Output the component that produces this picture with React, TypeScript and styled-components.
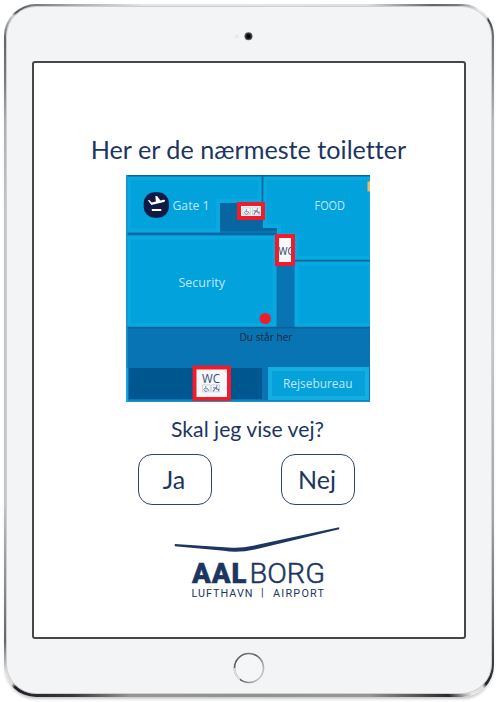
import React from 'react';
import styled, { createGlobalStyle } from 'styled-components';

const navy = '#1c3661';

const GlobalStyle = createGlobalStyle`
  * { box-sizing: border-box; }
  body {
    margin: 0;
    background: #fff;
    font-family: Lato, sans-serif;
    font-variant-ligatures: none;
    color: ${navy};
  }
`;

const Page = styled.main`
  width: 498px;
  height: 702px;
  padding: 4px 4px 5px;
  overflow: hidden;
`;

const MetalEdge = styled.div`
  width: 490px;
  height: 693px;
  padding: 2px 2px 3px;
  border-radius: 32px;
  background: conic-gradient(
    #e4e5e5 0deg, #dedfdf 19deg, #99999c 24deg, #66656a 28deg, #77777b 31deg,
    #eee 34deg, #e0e0e0 35.5deg, #444 35.9deg, #727277 38deg, #88888c 41deg,
    #b9babc 47deg, #c4c5c7 90deg, #a5a6a8 124deg, #77777b 135deg, #3d3d42 142deg,
    #222 144.6deg, #ddd 145.2deg, #e8e9e9 147deg, #29292c 150deg, #555 154deg,
    #969696 161deg, #8f9090 180deg, #969696 199deg, #38383b 207deg, #202124 214.8deg,
    #ddd 215.4deg, #e0e1e2 217deg, #66666a 220deg, #8d8d91 226deg, #c4c5c7 238deg,
    #c4c5c7 300deg, #b0b0b4 313deg, #7b7a80 318deg, #66656a 322deg, #d5d5d5 324.8deg,
    #555 325.4deg, #77777a 328deg, #aaa 333deg, #e4e5e5 343deg
  );
  box-shadow: 0 3px 3px -1px rgba(0, 0, 0, 0.22);
`;

const Casing = styled.div`
  height: 100%;
  display: flex;
  flex-direction: column;
  align-items: center;
  border: 1px solid #cdcfd1;
  border-radius: 30px;
  background: #f3f4f6;
`;

const CameraBar = styled.div`
  height: 54px;
  width: 100%;
  flex: none;
  display: flex;
  justify-content: center;
  padding: 23px 0 0;
`;

const Display = styled.section`
  width: 434px;
  height: 578px;
  flex: none;
  display: flex;
  flex-direction: column;
  align-items: center;
  padding-right: 2px;
  border: 2px solid #47474a;
  border-radius: 3px;
  background: #fff;
`;

const HomeBar = styled.div`
  flex: 1;
  display: flex;
  align-items: center;
  justify-content: center;
  padding-top: 3px;
`;

const Heading = styled.h1`
  margin: 70px 0 0;
  padding-left: 1px;
  font-size: 25.2px;
  line-height: 32px;
  font-weight: 400;
  white-space: nowrap;
`;

const Map = styled.svg`
  display: block;
  flex: none;
  margin-top: 10px;
`;

const Question = styled.p`
  margin: 13px 0 0;
  padding-right: 1px;
  font-size: 21.2px;
  line-height: 28px;
  white-space: nowrap;
`;

const Answers = styled.div`
  display: flex;
  gap: 69px;
  margin: 11px 0 0;
  padding-right: 3px;
`;

const AnswerButton = styled.button`
  width: 74px;
  height: 51px;
  padding: 0 2px 1px 0;
  border: 1.5px solid #2c4470;
  border-radius: 14px;
  background: #fff;
  color: ${navy};
  font: 400 25px Lato, sans-serif;
`;

const Logo = styled.svg`
  display: block;
  flex: none;
  margin-top: 21px;
  margin-left: 17px;
`;

const Camera = () => (
  <svg width="38" height="12" viewBox="230 30 38 12">
    <circle cx="236.8" cy="36.4" r="2" fill="#e8e9eb" />
    <circle cx="248.5" cy="36.3" r="4" fill="#5b5c60" />
    <circle cx="248.5" cy="36.3" r="3" fill="#1b1c1f" />
    <circle cx="248.5" cy="36.3" r="1.4" fill="#000" />
  </svg>
);

const HomeButton = () => (
  <svg width="34" height="34" viewBox="0 0 34 34">
    <defs>
      <linearGradient id="homeRing" x1="0" y1="0.2" x2="1" y2="0.8">
        <stop offset="0" stopColor="#55565a" />
        <stop offset="0.3" stopColor="#77787b" />
        <stop offset="0.48" stopColor="#5c5c60" />
        <stop offset="0.8" stopColor="#a6a7a9" />
        <stop offset="1" stopColor="#d4d5d6" />
      </linearGradient>
    </defs>
    <circle cx="17" cy="17" r="14.5" fill="#f5f6f7" stroke="url(#homeRing)" strokeWidth="1.7" />
    <path d="M2.5 17A14.5 14.5 0 0 0 8 28.4" fill="none" stroke="#dfe0e1" strokeWidth="1.8" />
  </svg>
);

const AccessIcons = ({ x, y }: { x: number; y: number }) => (
  <g transform={`translate(${x} ${y})`} fill="none" stroke="#6a7898" strokeWidth="0.9">
    <rect x="0.4" y="0.4" width="7.8" height="7" stroke="#c1c7d0" strokeWidth="0.7" />
    <path d="M3.8 1.5v2.8h2l1 2M3.1 3.6a1.7 1.7 0 1 0 2.3 2.3" />
    <rect x="9.8" y="0.4" width="7.8" height="7" stroke="#c1c7d0" strokeWidth="0.7" />
    <path d="M11.2 6.8l1.7-2.3 1.7-2 .2 2.3h1.8v2M11 3.2h2.3M14.4 1.2h1" strokeWidth="1.1" />
  </g>
);

const AirportMap = () => (
  <Map width="244" height="227" viewBox="126 175 244 227" fontFamily="'Open Sans', sans-serif">
    <rect x="126" y="175" width="244" height="227" fill="#0874b3" />
    <path d="M126 175h244v56H126z" fill="#07659f" />
    <g fill="#02a2dc" stroke="#09a9df" strokeWidth="4">
      <path d="M129 178H260.500V201H218V230.500H129Z" />
      <path d="M265 178H371V258H296.500V235H279V226H265Z" />
      <path d="M129 237.500H274.500V325.500H129Z" />
      <path d="M296.500 263.500H371V325.500H296.500Z" />
    </g>
    <path d="M126 175.500H370M126 327.700H370" stroke="#07639a" strokeWidth="1.8" />
    <path d="M126 233.800H276M262.500 175V205" stroke="#0868a4" strokeWidth="1.7" />
    <path d="M295 260.500H370" stroke="#0868a4" strokeWidth="1.5" />
    <path d="M129 368H262V399H129Z" fill="#00568f" />
    <path d="M126.800 175V402M126 401.200H370" stroke="#1995cb" strokeWidth="1.6" />
    <path d="M126.800 368V402" stroke="#18aae0" strokeWidth="2" />
    <rect x="270" y="369" width="97" height="29" fill="#04a1da" stroke="#14aee2" strokeWidth="4" />
    <rect x="367.500" y="181.500" width="2.500" height="10" fill="#efba63" />

    <rect x="143.700" y="192.300" width="25.200" height="25.400" rx="10.500" fill="#101b45" />
    <path d="M147.800 200.200l1.500-.3 2.400 2.600 4.200-1-.6-5.200 1.800-.4 3.300 4.600 3-.7c1.900-.4 2.300 1.600.6 2.100l-12.600 3.100z" fill="#fff" />
    <rect x="151.800" y="209" width="9.500" height="2.100" rx="0.500" fill="#fff" />

    <g fill="#bfe8fa" fontSize="13.500">
      <text x="172.500" y="210" textLength="37" lengthAdjust="spacingAndGlyphs">Gate 1</text>
      <text x="314.500" y="210" textLength="30.500" lengthAdjust="spacingAndGlyphs">FOOD</text>
      <text x="178.500" y="287" textLength="46.500" lengthAdjust="spacingAndGlyphs">Security</text>
      <text x="283" y="388" textLength="69.500" lengthAdjust="spacingAndGlyphs">Rejsebureau</text>
    </g>

    <rect x="239" y="204" width="24" height="14" fill="#f7f8fa" stroke="#f01c2b" strokeWidth="4" />
    <AccessIcons x={242.5} y={207.5} />

    <rect x="277" y="236" width="16" height="28" fill="#f7f8fa" stroke="#f01c2b" strokeWidth="4" />
    <svg x="279" y="242" width="12" height="18" viewBox="279 242 12 18">
      <text x="278.500" y="255" fontSize="10.500" fill="#243d69" textLength="15" lengthAdjust="spacingAndGlyphs">WC</text>
    </svg>

    <rect x="194.500" y="367.500" width="34.500" height="31.500" fill="#f7f8fa" stroke="#f01c2b" strokeWidth="4" />
    <text x="202" y="382.500" fontSize="13" fill="#334b78" textLength="18" lengthAdjust="spacingAndGlyphs">WC</text>
    <AccessIcons x={202} y={384.5} />

    <circle cx="265.200" cy="318.500" r="5.600" fill="#f01c2b" />
    <text x="239.500" y="341" fontSize="11" fill="#142638" textLength="53" lengthAdjust="spacingAndGlyphs">Du står her</text>
  </Map>
);

const AirportLogo = () => (
  <Logo width="166" height="72" viewBox="174 526 166 72" fill={navy}>
    <path d="M174.800 544.100L228 547.500Q241 548.600 253 545.800L339.200 527.200V529.300L258 548.800Q238 553.500 224 550.800L174.800 546.200Z" />
    <g fontFamily="Roboto, sans-serif" fontSize="27.500">
      <text x="192" y="583" fontWeight="900" stroke={navy} strokeWidth="0.5" textLength="54.500">AAL</text>
      <text x="249.500" y="583" fontWeight="300" stroke={navy} strokeWidth="0.5" textLength="75.500" lengthAdjust="spacingAndGlyphs">BORG</text>
    </g>
    <g fontFamily="Roboto, sans-serif" fontSize="10.800">
      <text x="191.500" y="596.500" textLength="61">LUFTHAVN</text>
      <text x="261" y="595.500">|</text>
      <text x="273" y="596.500" textLength="51">AIRPORT</text>
    </g>
  </Logo>
);

export default function App() {
  return (
    <>
      <GlobalStyle />
      <Page>
        <MetalEdge>
          <Casing>
            <CameraBar><Camera /></CameraBar>
            <Display>
              <Heading>Her er de nærmeste toiletter</Heading>
              <AirportMap />
              <Question>Skal jeg vise vej?</Question>
              <Answers>
                <AnswerButton type="button">Ja</AnswerButton>
                <AnswerButton type="button">Nej</AnswerButton>
              </Answers>
              <AirportLogo />
            </Display>
            <HomeBar><HomeButton /></HomeBar>
          </Casing>
        </MetalEdge>
      </Page>
    </>
  );
}
